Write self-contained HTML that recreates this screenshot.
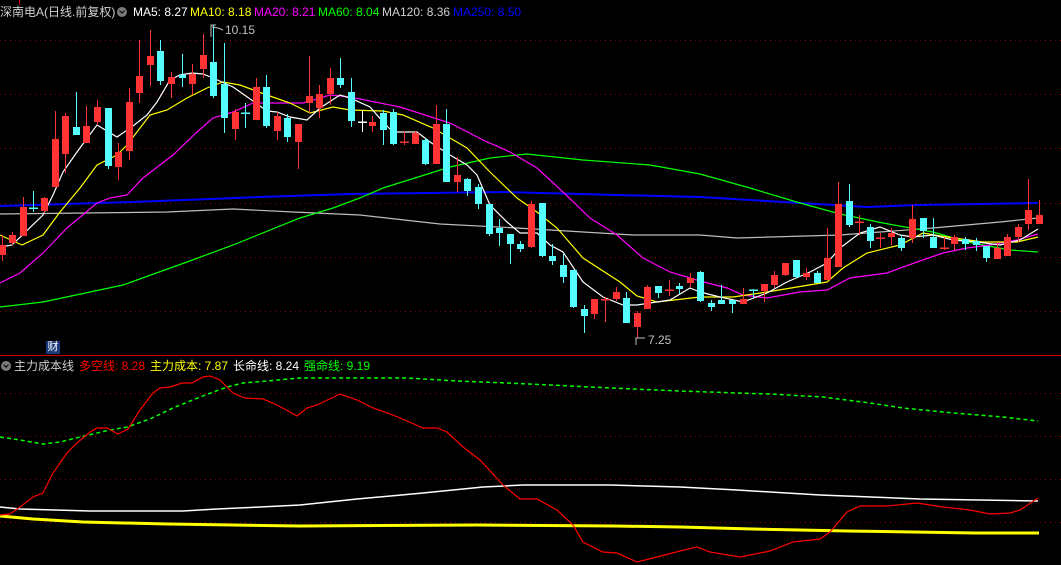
<!DOCTYPE html>
<html><head><meta charset="utf-8">
<style>
html,body{margin:0;padding:0;background:#000;width:1061px;height:565px;overflow:hidden}
body{position:relative;font-family:"Liberation Sans","Noto Sans CJK SC",sans-serif;font-size:12px}
.t{position:absolute;white-space:nowrap;line-height:14px}
svg{position:absolute;left:0;top:0}
.ic{position:absolute;width:10px;height:10px;border-radius:50%;background:#7a7a7a}
.ic:after{content:"";position:absolute;left:3px;top:2px;width:3px;height:3px;border-right:1.3px solid #000;border-bottom:1.3px solid #000;transform:rotate(45deg)}
</style></head><body>
<svg id="s" width="1061" height="565" xmlns="http://www.w3.org/2000/svg">
<g stroke="#8a0000" stroke-width="1" stroke-dasharray="1,4">
<line x1="0" y1="40.5" x2="1061" y2="40.5"/>
<line x1="0" y1="94.5" x2="1061" y2="94.5"/>
<line x1="0" y1="148.5" x2="1061" y2="148.5"/>
<line x1="0" y1="203.5" x2="1061" y2="203.5"/>
<line x1="0" y1="257.5" x2="1061" y2="257.5"/>
<line x1="0" y1="311.5" x2="1061" y2="311.5"/>
<line x1="0" y1="393.5" x2="1061" y2="393.5"/>
<line x1="0" y1="436.5" x2="1061" y2="436.5"/>
<line x1="0" y1="479.5" x2="1061" y2="479.5"/>
<line x1="0" y1="522.5" x2="1061" y2="522.5"/>
</g>
<line x1="0" y1="355.5" x2="1061" y2="355.5" stroke="#d00000" stroke-width="1"/>
<line x1="19.5" y1="0" x2="19.5" y2="5" stroke="#d00000"/>
<g fill="none" stroke-width="1.2">
<polyline stroke="#0000ff" stroke-width="2" points="0,206 133,202 260,197 350,194 503,192 617,195 700,197 867,207 917,205 1038,203"/>
<polyline stroke="#bdbdbd" points="0,214 167,212 233,209 293,212 360,215 440,224 517,228 633,235 700,235 737,238 840,235 933,228 1000,222 1038,218"/>
<polyline stroke="#00ff00" points="0,307 43,302 123,285 187,262 233,245 300,218 333,208 360,198 383,188 450,167 490,158 527,154 583,160 650,165 700,174 750,188 800,203 840,214 883,223 933,232 967,242 1010,250 1038,252"/>
<polyline stroke="#ff00ff" points="0,283 20,273 43,253 67,228 97,203 110,198 127,195 143,178 173,155 197,132 213,118 233,112 253,103 303,103 330,95 350,97 400,107 450,123 483,140 510,152 537,168 563,192 590,218 617,235 643,258 670,272 700,281 727,288 743,295 767,298 800,292 827,290 850,278 887,273 917,262 943,253 967,248 990,245 1017,240 1038,234"/>
<polyline stroke="#ffff00" points="0,235 22,245 43,235 60,212 80,188 97,165 117,155 127,145 150,115 167,110 187,98 207,88 223,82 240,85 267,95 290,103 310,113 333,107 350,110 383,111 403,115 433,128 467,148 490,172 517,198 537,212 557,228 583,258 620,282 637,296 657,302 700,297 733,297 767,292 827,282 843,268 867,253 900,245 923,233 947,237 983,242 1017,242 1038,237"/>
<polyline stroke="#ffffff" points="0,247 12,245 43,215 53,195 63,172 77,152 97,125 117,137 133,126 147,115 157,102 170,80 180,75 192,73 203,74 213,78 233,87 253,101 267,111 277,112 290,117 307,120 320,108 340,95 350,98 370,107 383,122 393,132 417,132 430,142 450,155 467,165 477,175 490,205 507,222 520,233 537,233 550,245 563,252 583,282 603,297 623,305 637,305 650,303 670,300 690,288 700,292 720,297 743,302 767,293 787,282 810,272 827,263 840,248 860,233 880,227 900,235 913,237 933,235 953,240 977,242 1000,245 1020,240 1038,229"/>
</g>
<g id="cd"></g>
<g fill="none">
<polyline stroke="#ffff00" stroke-width="3" points="0,516 33,519 83,522 167,524 233,525 300,526 477,525 615,526 680,527 753,529 848,531 975,533 1039,533"/>
<polyline stroke="#ffffff" stroke-width="1.5" points="0,507 20,509 90,511 183,511 217,509 260,507 300,505 357,499 423,493 483,487 523,485 610,485 680,487 737,490 820,495 920,499 1038,501"/>
<polyline stroke="#00ff00" stroke-width="1.5" stroke-dasharray="4,3" points="0,437 20,440 43,444 60,442 80,437 110,430 127,427 150,419 173,408 200,397 227,387 243,383 267,381 300,378 407,378 457,381 507,383 550,385 590,387 633,389 680,391 737,393 770,394 823,397 870,403 903,408 953,413 1003,417 1038,421"/>
<polyline stroke="#ff0000" stroke-width="1.2" points="0,515 10,514 20,507 33,497 43,493 53,473 67,453 77,443 90,432 97,428 107,428 118,434 128,429 140,410 153,393 160,388 170,387 182,383 192,383 203,377 210,376 220,380 233,393 245,398 263,399 277,405 290,412 297,416 307,408 317,405 340,394 357,400 373,408 393,415 407,421 423,428 437,428 447,432 463,447 480,460 503,485 520,499 537,499 557,510 573,525 583,542 603,552 617,553 637,562 657,557 680,551 697,547 710,552 740,557 770,551 793,542 820,539 830,532 847,512 860,506 887,506 917,503 943,507 970,510 990,514 1010,513 1020,510 1038,498"/>
</g>
<g stroke="#c0c0c0" fill="none" stroke-width="1">
<polyline points="211,37 211,25 216,25"/><polyline points="212,27 218,28 223,30"/>
<polyline points="636,345 636,338 645,338"/>
</g>
<text x="225" y="34" fill="#c0c0c0" font-family="Liberation Sans" font-size="12">10.15</text>
<text x="648" y="344" fill="#c0c0c0" font-family="Liberation Sans" font-size="12">7.25</text>
</svg>
<div class="t" style="left:0;top:5px;color:#d0d0d0">深南电A(日线.前复权)</div>
<div class="ic" style="left:117px;top:7px"></div>
<div class="t" style="left:133px;top:5px;color:#fff">MA5: 8.27</div>
<div class="t" style="left:190px;top:5px;color:#ffff00">MA10: 8.18</div>
<div class="t" style="left:254px;top:5px;color:#ff00ff">MA20: 8.21</div>
<div class="t" style="left:318px;top:5px;color:#00ff00">MA60: 8.04</div>
<div class="t" style="left:382px;top:5px;color:#d0d0d0">MA120: 8.36</div>
<div class="t" style="left:453px;top:5px;color:#0000ff">MA250: 8.50</div>
<div class="t" style="left:46px;top:341px;width:14px;height:13px;background:#1a3a7a;color:#fff;font-size:11px;line-height:13px;text-align:center">财</div>
<div class="ic" style="left:1px;top:361px"></div>
<div class="t" style="left:14px;top:359px;color:#d0d0d0">主力成本线</div>
<div class="t" style="left:79px;top:359px;color:#ff0000">多空线: 8.28</div>
<div class="t" style="left:150px;top:359px;color:#ffff00">主力成本: 7.87</div>
<div class="t" style="left:233px;top:359px;color:#fff">长命线: 8.24</div>
<div class="t" style="left:304px;top:359px;color:#00ff00">强命线: 9.19</div>
<script>
var d="r 245 255 235 261|r 235 243 232 245|r 207 236 197 236|c 207 209 191 212|r 198 211 197 213|r 139 187 111 187|r 116 154 113 173|c 127 135 92 135|r 126 143 106 143|r 107 122 100 125|c 108 166 108 169|r 152 167 143 180|r 102 151 88 160|r 76 93 40 103|r 56 65 30 86|c 51 81 40 85|r 77 84 72 98|c 75 78 54 87|r 74 84 64 95|r 55 69 34 78|c 62 96 25 98|c 84 118 43 133|r 112 129 109 140|c 112 114 103 128|r 87 120 78 120|c 87 126 75 128|r 116 131 112 140|c 118 137 114 142|r 124 142 124 169|r 96 103 56 113|r 94 108 85 118|r 78 94 68 105|c 78 85 58 88|c 92 121 78 127|w 121 123 110 132|r 122 126 116 132|c 113 130 110 145|c 112 144 109 145|r 141 143 131 145|r 133 144 131 144|c 140 164 138 165|r 124 164 105 164|c 124 182 109 182|r 175 182 157 192|c 179 191 178 196|c 187 204 184 209|c 204 234 204 236|c 228 233 219 246|c 234 244 234 264|c 244 249 241 252|r 204 247 201 248|c 203 256 203 257|c 256 261 244 265|c 265 277 254 283|c 270 307 270 308|c 309 316 305 333|r 299 314 299 319|r 299 300 297 322|r 292 299 287 301|c 298 323 292 323|r 313 327 311 338|r 287 309 285 309|c 286 293 286 298|r 289 291 280 296|c 286 289 283 294|r 278 283 273 287|c 272 301 271 302|c 303 307 300 311|c 300 304 285 304|c 300 304 300 313|r 299 304 288 304|c 289 291 289 298|r 284 291 284 302|r 275 285 271 288|r 263 275 263 276|c 260 277 260 278|r 273 277 268 280|c 273 283 271 283|r 258 280 228 280|r 204 267 182 267|c 201 225 184 227|r 221 223 215 235|c 227 241 224 248|r 237 239 233 248|r 233 237 228 245|c 238 248 235 251|r 219 238 205 243|c 218 231 218 238|c 237 248 218 248|r 247 249 237 250|r 237 244 235 250|c 239 244 237 250|c 241 245 238 251|c 246 258 246 262|r 248 259 243 259|r 237 256 234 256|r 227 237 224 242|r 210 224 179 230|r 215 224 200 224".split("|");
var h="",col={r:"#ff3333",c:"#55ffff",w:"#ffffff"};
d.forEach(function(s,i){var a=s.split(" "),c=col[a[0]],x=Math.round(1.7+10.585*i),bt=+a[1],bb=+a[2],wt=+a[3],wb=+a[4];
h+='<line x1="'+(x+0.5)+'" y1="'+wt+'" x2="'+(x+0.5)+'" y2="'+wb+'" stroke="'+c+'" stroke-width="1"/>';
if(bb-bt<=2){h+='<rect x="'+(x-4)+'" y="'+(bt+(bb-bt)/2-0.5)+'" width="9" height="1.5" fill="'+c+'"/>';}
else h+='<rect x="'+(x-3)+'" y="'+bt+'" width="7" height="'+(bb-bt)+'" fill="'+c+'"/>';});
document.getElementById("cd").innerHTML=h;
</script>
</body></html>
